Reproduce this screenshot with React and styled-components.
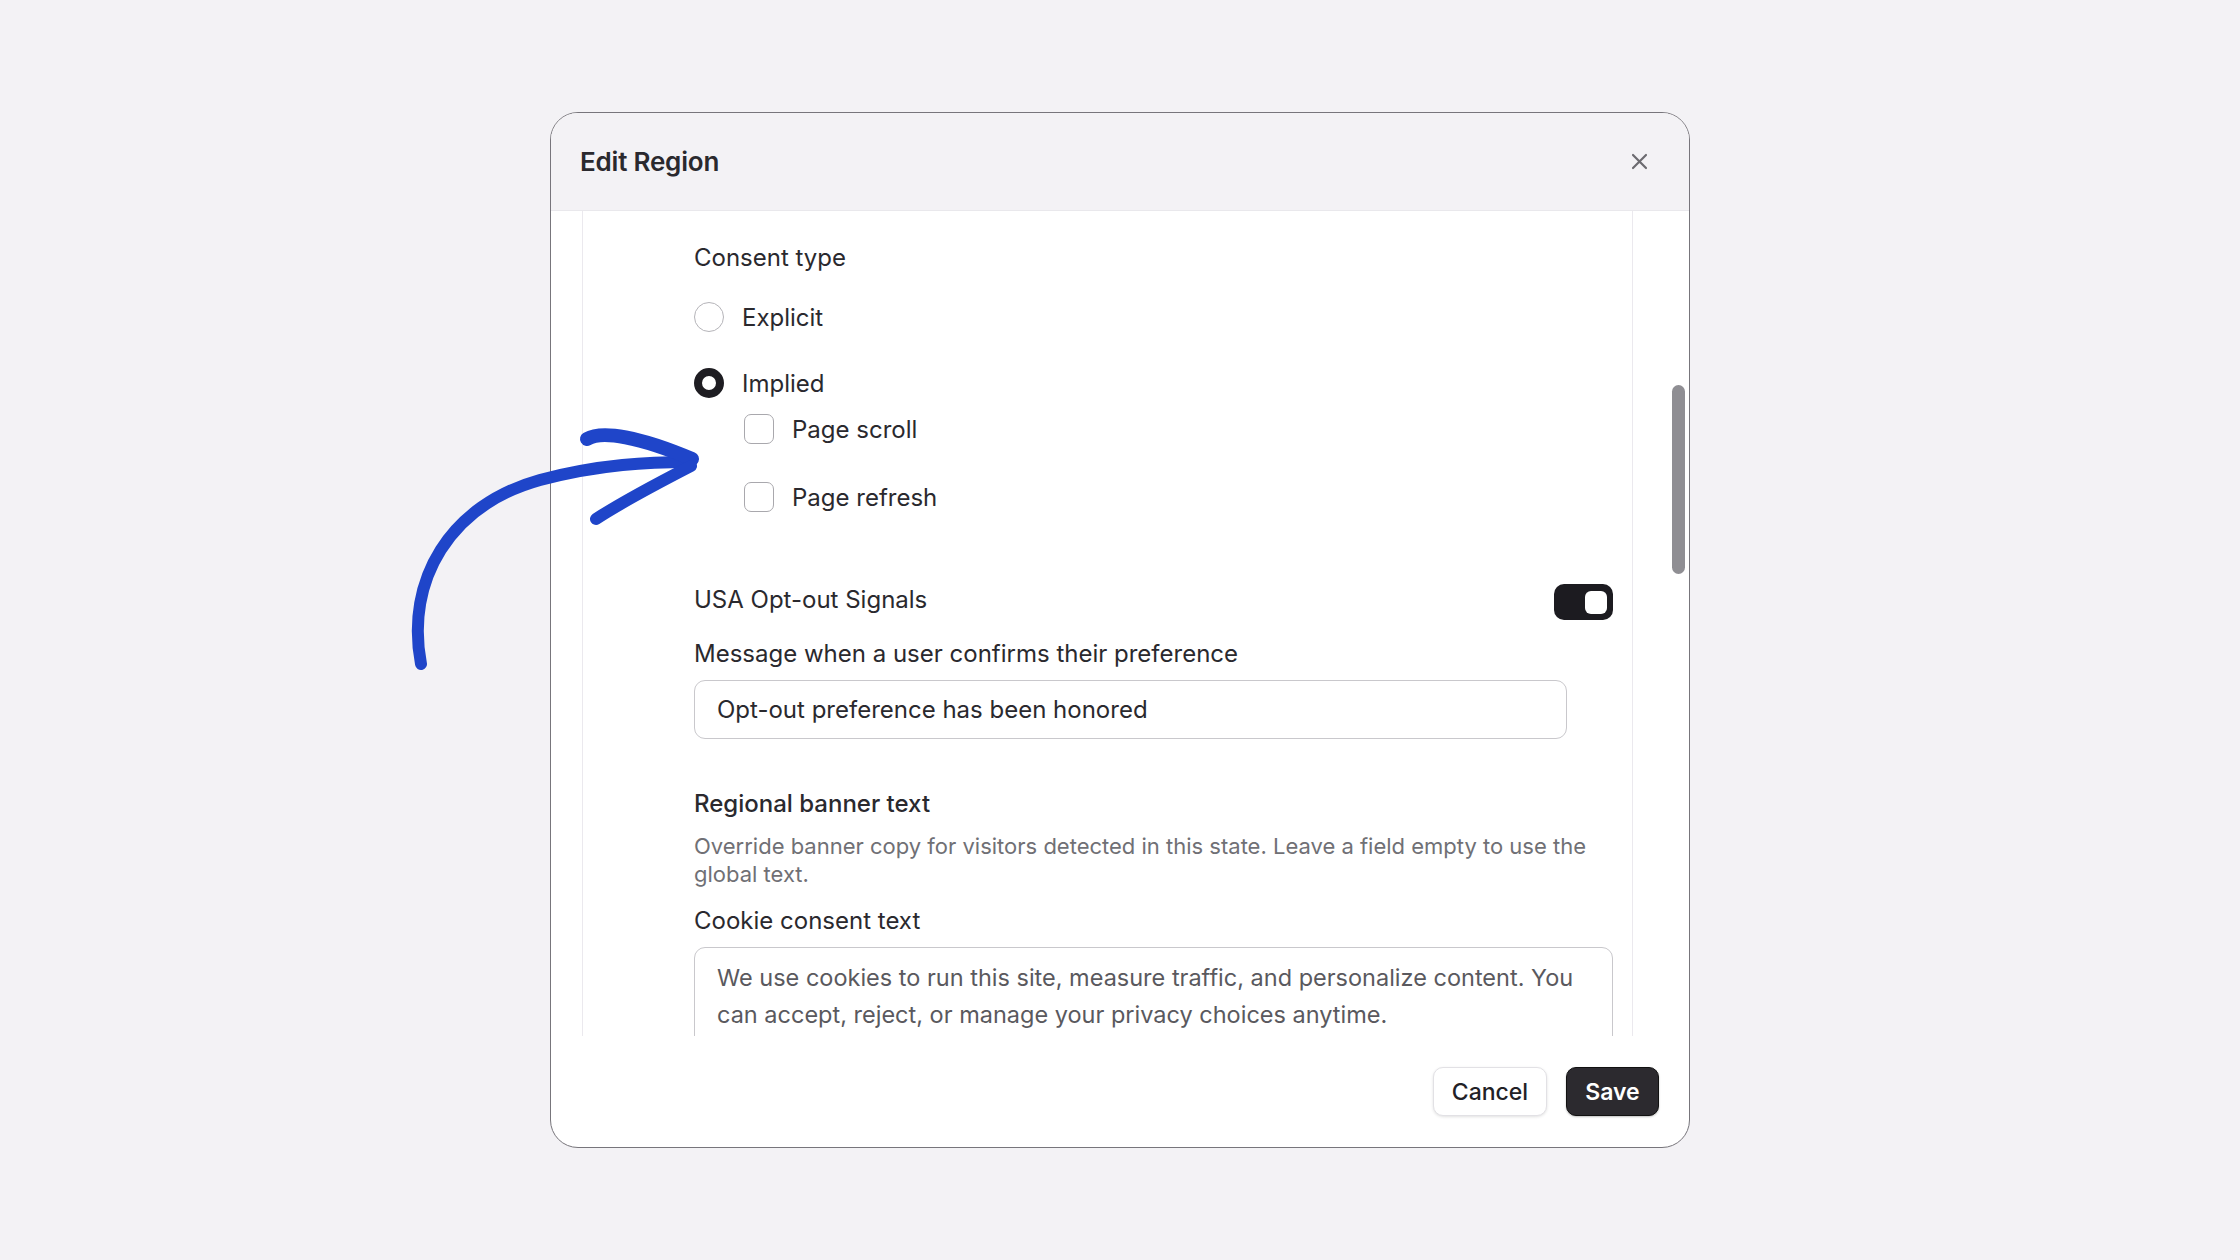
import React from "react";
import styled, { createGlobalStyle } from "styled-components";

const GlobalStyle = createGlobalStyle`
  * { box-sizing: border-box; }
  html, body { margin: 0; padding: 0; }
  body {
    background: #f3f2f5;
    font-family: Inter, "Noto Sans", sans-serif;
    color: #2a292e;
  }
`;

const Page = styled.div`
  position: relative;
  width: 100vw;
  height: 100vh;
  display: flex;
  align-items: center;
  justify-content: center;
  overflow: hidden;
`;

const Modal = styled.div`
  width: 1140px;
  height: 1036px;
  background: #fff;
  border: 1.5px solid #77757b;
  border-radius: 28px;
  overflow: hidden;
  display: flex;
  flex-direction: column;
`;

const Header = styled.header`
  height: 98px;
  flex: none;
  background: #f3f2f5;
  border-bottom: 1px solid #e9e8ec;
  display: flex;
  align-items: center;
  justify-content: space-between;
  padding: 0 40px 0 29px;
`;

const Title = styled.h2`
  margin: 0;
  font-size: 26px;
  font-weight: 600;
  letter-spacing: -0.2px;
  color: #2a292e;
`;

const CloseButton = styled.button`
  border: 0;
  background: none;
  padding: 0;
  width: 20px;
  height: 20px;
  display: flex;
  align-items: center;
  justify-content: center;
  color: #6c6b70;
  cursor: pointer;
`;

const ScrollArea = styled.div`
  position: relative;
  flex: 1;
  display: flex;
  overflow: hidden;
`;

const Panel = styled.div`
  margin-left: 31px;
  width: 1051px;
  border-left: 1px solid #ebe9ee;
  border-right: 1px solid #ebe9ee;
  padding: 31px 19px 0 111px;
  overflow: hidden;
`;

const Thumb = styled.div`
  position: absolute;
  right: 4px;
  top: 174px;
  width: 13px;
  height: 189px;
  border-radius: 7px;
  background: #8f8e93;
`;

const Label = styled.div`
  font-size: 24px;
  line-height: 32px;
  font-weight: ${(p) => (p.$strong ? 500 : 400)};
  color: #2a292e;
  margin-top: ${(p) => p.$mt || 0}px;
`;

const Description = styled.p`
  margin: 12px 0 0;
  font-size: 22px;
  line-height: 28px;
  color: #707075;
`;

const OptionRow = styled.label`
  display: flex;
  align-items: center;
  gap: 18px;
  height: 30px;
  margin-top: ${(p) => p.$mt}px;
  margin-left: ${(p) => p.$indent || 0}px;
  font-size: 24px;
  color: #2a292e;
  span {
    position: relative;
    top: ${(p) => (p.$lift ? -4 : 0)}px;
  }
`;

const Radio = styled.span`
  width: 30px;
  height: 30px;
  flex: none;
  border-radius: 50%;
  background: #fff;
  border: ${(p) => (p.$checked ? "8px solid #1e1d22" : "1.5px solid #b5b4b9")};
`;

const Checkbox = styled.span`
  width: 30px;
  height: 30px;
  flex: none;
  border-radius: 7px;
  background: #fff;
  border: 1.5px solid #a9a8ad;
`;

const ToggleRow = styled.div`
  display: flex;
  align-items: flex-start;
  justify-content: space-between;
  margin-top: 68px;
  height: 36px;
`;

const Toggle = styled.div`
  width: 59px;
  height: 36px;
  border-radius: 10px;
  background: #1c1b20;
  display: flex;
  align-items: center;
  justify-content: ${(p) => (p.$on ? "flex-end" : "flex-start")};
  padding: 0 6px;
`;

const Knob = styled.div`
  width: 22px;
  height: 23px;
  border-radius: 6px;
  background: #fff;
`;

const TextInput = styled.div`
  margin-top: 10px;
  width: 873px;
  height: 59px;
  border: 1.5px solid #c9c8cc;
  border-radius: 11px;
  padding: 0 22px;
  display: flex;
  align-items: center;
  font-size: 24px;
  color: #2a292e;
`;

const TextArea = styled.div`
  margin-top: 10px;
  height: 160px;
  border: 1.5px solid #c9c8cc;
  border-radius: 11px;
  padding: 11px 22px;
  font-size: 23.5px;
  line-height: 37px;
  color: #5a595e;
`;

const Footer = styled.footer`
  height: 111px;
  flex: none;
  display: flex;
  align-items: center;
  justify-content: flex-end;
  gap: 19px;
  padding-right: 30px;
`;

const Button = styled.button`
  height: 49px;
  width: ${(p) => (p.$primary ? 93 : 114)}px;
  padding: 0;
  border-radius: 10px;
  font-family: inherit;
  font-size: 23px;
  font-weight: ${(p) => (p.$primary ? 600 : 500)};
  color: ${(p) => (p.$primary ? "#fff" : "#222126")};
  background: ${(p) => (p.$primary ? "#2c2a2f" : "#fff")};
  border: ${(p) => (p.$primary ? "1.5px solid #111" : "1px solid #e2e1e5")};
  box-shadow: ${(p) =>
    p.$primary ? "0 1px 2px rgba(0,0,0,0.25)" : "0 1px 3px rgba(0,0,0,0.12)"};
  cursor: pointer;
`;

const ArrowLayer = styled.svg`
  position: absolute;
  left: 0;
  top: 0;
  width: 2240px;
  height: 1260px;
  pointer-events: none;
`;

const Arrow = () => (
  <ArrowLayer viewBox="0 0 2240 1260">
    <g
      fill="none"
      stroke="#1f45c9"
      strokeWidth="12"
      strokeLinecap="round"
      strokeLinejoin="round"
    >
      <path d="M421 664 C405 580, 450 505, 540 480 C600 464, 650 462, 690 462" />
      <path d="M587 439 C602 430, 640 437, 692 459" strokeWidth="14" />
      <path d="M691 466 C660 482, 625 500, 596 519" />
    </g>
  </ArrowLayer>
);

export default function App() {
  return (
    <Page>
      <GlobalStyle />
      <Modal>
        <Header>
          <Title>Edit Region</Title>
          <CloseButton aria-label="Close">
            <svg width="17" height="17" viewBox="0 0 17 17">
              <path
                d="M2 2 L15 15 M15 2 L2 15"
                stroke="currentColor"
                strokeWidth="2.2"
                strokeLinecap="round"
              />
            </svg>
          </CloseButton>
        </Header>
        <ScrollArea>
          <Panel>
            <Label>Consent type</Label>
            <OptionRow $mt={28}>
              <Radio />
              <span>Explicit</span>
            </OptionRow>
            <OptionRow $mt={36}>
              <Radio $checked />
              <span>Implied</span>
            </OptionRow>
            <OptionRow $mt={20} $indent={50} $lift>
              <Checkbox />
              <span>Page scroll</span>
            </OptionRow>
            <OptionRow $mt={38} $indent={50} $lift>
              <Checkbox />
              <span>Page refresh</span>
            </OptionRow>
            <ToggleRow>
              <Label>USA Opt-out Signals</Label>
              <Toggle $on>
                <Knob />
              </Toggle>
            </ToggleRow>
            <Label $mt={18}>Message when a user confirms their preference</Label>
            <TextInput>Opt-out preference has been honored</TextInput>
            <Label $mt={49} $strong>
              Regional banner text
            </Label>
            <Description>
              Override banner copy for visitors detected in this state. Leave a
              field empty to use the global text.
            </Description>
            <Label $mt={17}>Cookie consent text</Label>
            <TextArea>
              We use cookies to run this site, measure traffic, and personalize
              content. You can accept, reject, or manage your privacy choices
              anytime.
            </TextArea>
          </Panel>
          <Thumb />
        </ScrollArea>
        <Footer>
          <Button>Cancel</Button>
          <Button $primary>Save</Button>
        </Footer>
      </Modal>
      <Arrow />
    </Page>
  );
}
